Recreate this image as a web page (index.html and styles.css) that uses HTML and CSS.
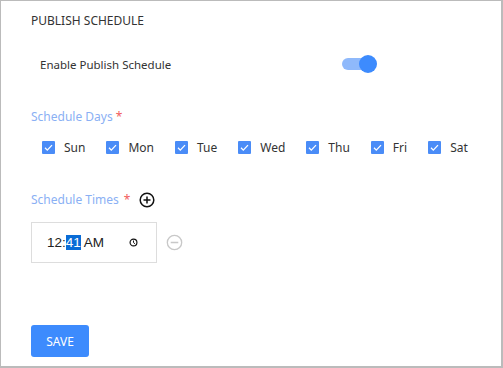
FILE: index.html
```html
<!DOCTYPE html>
<html lang="en">

<head>
    <meta charset="UTF-8">
    <meta name="viewport" content="width=device-width, initial-scale=1.0">
    <title>Publish Schedule</title>
    <link rel="stylesheet" href="styles.css">
</head>

<body>
    <div class="painel">
        <div class="titulo">PUBLISH SCHEDULE</div>

        <div class="linha-toggle">
            <span class="texto-toggle">Enable Publish Schedule</span>
            <span class="toggle"><span class="bolinha"></span></span>
        </div>

        <div class="rotulo">Schedule Days <span class="obrigatorio">*</span></div>
        <div class="dias">
            <label class="dia"><span class="caixa"><svg viewBox="0 0 13 13" width="13" height="13"><path d="M3 6.8l2.3 2.3 4.7-5" fill="none" stroke="#fff" stroke-width="1.3"/></svg></span>Sun</label>
            <label class="dia"><span class="caixa"><svg viewBox="0 0 13 13" width="13" height="13"><path d="M3 6.8l2.3 2.3 4.7-5" fill="none" stroke="#fff" stroke-width="1.3"/></svg></span>Mon</label>
            <label class="dia"><span class="caixa"><svg viewBox="0 0 13 13" width="13" height="13"><path d="M3 6.8l2.3 2.3 4.7-5" fill="none" stroke="#fff" stroke-width="1.3"/></svg></span>Tue</label>
            <label class="dia"><span class="caixa"><svg viewBox="0 0 13 13" width="13" height="13"><path d="M3 6.8l2.3 2.3 4.7-5" fill="none" stroke="#fff" stroke-width="1.3"/></svg></span>Wed</label>
            <label class="dia"><span class="caixa"><svg viewBox="0 0 13 13" width="13" height="13"><path d="M3 6.8l2.3 2.3 4.7-5" fill="none" stroke="#fff" stroke-width="1.3"/></svg></span>Thu</label>
            <label class="dia"><span class="caixa"><svg viewBox="0 0 13 13" width="13" height="13"><path d="M3 6.8l2.3 2.3 4.7-5" fill="none" stroke="#fff" stroke-width="1.3"/></svg></span>Fri</label>
            <label class="dia"><span class="caixa"><svg viewBox="0 0 13 13" width="13" height="13"><path d="M3 6.8l2.3 2.3 4.7-5" fill="none" stroke="#fff" stroke-width="1.3"/></svg></span>Sat</label>
        </div>

        <div class="rotulo rotulo-horas">
            Schedule Times <span class="obrigatorio">*</span>
            <svg class="mais" viewBox="0 0 16 16" width="16" height="16">
                <circle cx="8" cy="8" r="6.8" fill="none" stroke="#111" stroke-width="1.5"/>
                <path d="M4.5 8h7M8 4.5v7" stroke="#111" stroke-width="1.5"/>
            </svg>
        </div>
        <div class="horas">
            <div class="campo-hora">
                <span>12:<span class="selecionado">41</span> AM</span>
                <svg class="relogio" viewBox="0 0 10 10" width="9" height="9">
                    <circle cx="5" cy="5" r="3.8" fill="none" stroke="#111" stroke-width="1.3"/>
                    <path d="M5 2.8v2.3l1.6 1.3" fill="none" stroke="#111" stroke-width="1.1"/>
                </svg>
            </div>
            <svg class="menos" viewBox="0 0 18 18" width="17" height="17">
                <circle cx="9" cy="9" r="7.6" fill="none" stroke="#c8c8c8" stroke-width="1.4"/>
                <path d="M5 9h8" stroke="#c8c8c8" stroke-width="1.6"/>
            </svg>
        </div>

        <button class="salvar">SAVE</button>
    </div>
</body>

</html>
```

FILE: styles.css
```css
body {
    margin: 0;
    background-color: #fff;
    font-family: "Noto Sans", sans-serif;
    color: #333;
}

.painel {
    box-sizing: border-box;
    width: 503px;
    height: 368px;
    border: 1px solid #bbb;
    border-right-width: 2px;
    border-bottom-width: 2px;
    padding: 12px 30px 0;
}

.titulo {
    font-size: 12px;
    line-height: 16px;
}

.linha-toggle {
    display: flex;
    align-items: center;
    font-size: 11.5px;
    margin: 26px 0 0 9px;
    height: 18px;
}

.texto-toggle {
    width: 302px;
}

.toggle {
    position: relative;
    width: 32px;
    height: 12px;
    border-radius: 6px;
    background-color: #8fb9fb;
}

.bolinha {
    position: absolute;
    right: -3px;
    top: -3px;
    width: 18px;
    height: 18px;
    border-radius: 50%;
    background-color: #3d8bfd;
}

.rotulo {
    color: #8ab0f4;
    font-size: 12px;
    line-height: 16px;
    margin-top: 36px;
}

.obrigatorio {
    color: #f25c5c;
}

.dias {
    display: flex;
    margin: 14px 0 0 11px;
    font-size: 12px;
}

.dia {
    display: flex;
    align-items: center;
    margin-right: 21px;
}

.caixa {
    display: inline-flex;
    width: 13px;
    height: 13px;
    background-color: #4a8cf7;
    border-radius: 1px;
    margin-right: 9px;
}

.rotulo-horas {
    display: flex;
    align-items: center;
    gap: 5px;
    margin-top: 36px;
}

.mais {
    margin-left: 4px;
}

.horas {
    display: flex;
    align-items: center;
    margin-top: 14px;
}

.campo-hora {
    box-sizing: border-box;
    width: 126px;
    height: 41px;
    border: 1px solid #ddd;
    display: flex;
    align-items: center;
    justify-content: space-between;
    padding: 0 18px 0 15px;
    font-family: "Liberation Sans", Arial, sans-serif;
    font-size: 13.5px;
    color: #222;
}

.selecionado {
    background-color: #0a6cd6;
    color: #fff;
}

.menos {
    margin-left: 9px;
}

.salvar {
    margin-top: 62px;
    width: 58px;
    height: 32px;
    border: none;
    border-radius: 3px;
    background-color: #3d8bfd;
    color: #fff;
    font-family: "Noto Sans", sans-serif;
    font-size: 12px;
    cursor: pointer;
}
```
